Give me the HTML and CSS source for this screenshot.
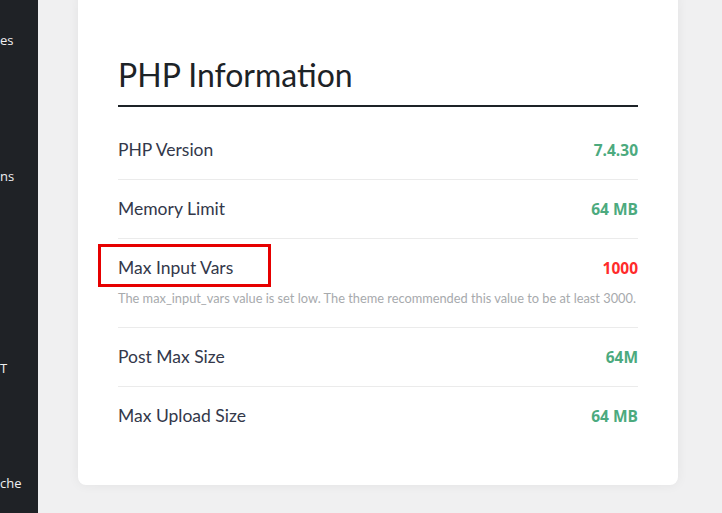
FILE: index.html
```html
<!DOCTYPE html>
<html>
<head>
<meta charset="utf-8">
<link rel="stylesheet" href="styles.css">
</head>
<body>
<div class="layout">
  <nav class="sidebar">
    <div class="nav-item i1">es</div>
    <div class="nav-item i2">ns</div>
    <div class="nav-item i3">T</div>
    <div class="nav-item i4">che</div>
  </nav>
  <main class="main">
    <section class="card">
      <h1 class="title">PHP Information</h1>
      <div class="rows">
        <div class="row">
          <div class="row-line"><span class="label">PHP Version</span><span class="value ok">7.4.30</span></div>
        </div>
        <div class="row">
          <div class="row-line"><span class="label">Memory Limit</span><span class="value ok">64 MB</span></div>
        </div>
        <div class="row warn-row">
          <div class="row-line"><span class="label highlight">Max Input Vars</span><span class="value bad">1000</span></div>
          <div class="note">The max_input_vars value is set low. The theme recommended this value to be at least 3000.</div>
        </div>
        <div class="row">
          <div class="row-line"><span class="label">Post Max Size</span><span class="value ok">64M</span></div>
        </div>
        <div class="row last">
          <div class="row-line"><span class="label">Max Upload Size</span><span class="value ok">64 MB</span></div>
        </div>
      </div>
    </section>
  </main>
</div>
</body>
</html>
```
FILE: styles.css
```css
html, body {
  margin: 0;
  padding: 0;
  height: 100%;
  overflow: hidden;
}
body {
  background: #f0f0f1;
  font-family: "Lato", "Open Sans", sans-serif;
}
.layout {
  display: flex;
  height: 513px;
}
.sidebar {
  width: 38px;
  flex: none;
  background: #1f2226;
  color: #f0f0f1;
  font-family: "Open Sans", sans-serif;
  font-size: 13px;
  overflow: hidden;
  display: flex;
  flex-direction: column;
  align-items: flex-start;
}
.nav-item {
  white-space: nowrap;
  line-height: 18px;
}
.i1 { margin-top: 31px; }
.i2 { margin-top: 118px; }
.i3 { margin-top: 174px; }
.i4 { margin-top: 97px; }
.main {
  flex: 1;
  padding-left: 40px;
}
.card {
  width: 520px;
  margin-top: -8px;
  background: #fff;
  border-radius: 8px;
  box-shadow: 0 0 12px rgba(0,0,0,0.06);
  padding: 63px 40px 40px;
}
.title {
  margin: 0;
  font-weight: 400;
  font-size: 32px;
  line-height: 40px;
  color: #1d2327;
  padding-bottom: 10px;
  border-bottom: 2px solid #1d2327;
}
.rows {
  margin-top: 14px;
}
.row {
  border-bottom: 1px solid #ebebeb;
  padding: 18px 0;
}
.row.last { border-bottom: none; }
.warn-row { padding-bottom: 21px; }
.row-line {
  display: flex;
  justify-content: space-between;
  align-items: center;
  line-height: 22px;
}
.label {
  font-size: 17.5px;
  color: #33384a;
}
.highlight {
  position: relative;
}
.highlight::after {
  content: "";
  position: absolute;
  left: -20px;
  top: -13px;
  width: 167px;
  height: 37px;
  border: 3px solid #e60000;
}
.value {
  font-family: "Open Sans", sans-serif;
  font-weight: 700;
  font-size: 15.5px;
}
.ok { color: #4caa7e; }
.bad { color: #ff2a2a; }
.note {
  font-size: 12.8px;
  color: #a7aaad;
  margin-top: 11px;
  line-height: 16px;
}
```
